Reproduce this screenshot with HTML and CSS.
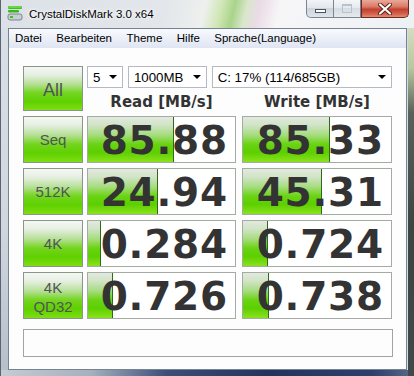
FILE: index.html
```html
<!DOCTYPE html>
<html>
<head>
<meta charset="utf-8">
<title>CrystalDiskMark 3.0 x64</title>
<link rel="stylesheet" href="styles.css">
</head>
<body>
<div class="window">
  <div class="titlebar">
    <svg class="app-icon" width="16" height="16" viewBox="0 0 16 16">
      <rect x="1" y="1" width="14" height="3" rx="1" fill="#3cc21e"/>
      <rect x="1.5" y="1.5" width="13" height="1" fill="#8eea6a"/>
      <rect x="1" y="5" width="11" height="2.5" rx="1" fill="#34b81a"/>
      <rect x="1" y="9" width="14" height="6" rx="2" fill="#c9ced4" stroke="#7d858e" stroke-width="1"/>
      <rect x="3" y="11" width="3" height="2" fill="#3cc21e"/>
    </svg>
    <span class="title">CrystalDiskMark 3.0 x64</span>
    <div class="caption">
      <div class="cbtn cmin"><span class="min-glyph"></span></div>
      <div class="cbtn cmax"><span class="max-glyph"></span></div>
      <div class="cbtn cclose">
        <svg width="16" height="12" viewBox="0 0 16 12">
          <path d="M3 1.5 L13 10.5 M13 1.5 L3 10.5" stroke="#5a1e18" stroke-width="4" stroke-linecap="round"/>
          <path d="M3 1.5 L13 10.5 M13 1.5 L3 10.5" stroke="#ffffff" stroke-width="2.2" stroke-linecap="round"/>
        </svg>
      </div>
    </div>
  </div>
  <div class="client">
    <div class="menubar">
      <span class="mitem">Datei</span>
      <span class="mitem">Bearbeiten</span>
      <span class="mitem">Theme</span>
      <span class="mitem">Hilfe</span>
      <span class="mitem">Sprache(Language)</span>
    </div>
    <div class="content">
      <div class="board">
        <div class="gbtn all">All</div>
        <div class="selects">
          <div class="select s-count"><span>5</span><i class="arrow"></i></div>
          <div class="select s-size"><span>1000MB</span><i class="arrow"></i></div>
          <div class="select s-drive"><span>C: 17% (114/685GB)</span><i class="arrow"></i></div>
        </div>
        <div class="head">Read [MB/s]</div>
        <div class="head write">Write [MB/s]</div>

        <div class="gbtn">Seq</div>
        <div class="val"><div class="bar" style="width:58.7%"></div><span class="num">85.88</span></div>
        <div class="val write"><div class="bar" style="width:58.6%"></div><span class="num">85.33</span></div>

        <div class="gbtn">512K</div>
        <div class="val"><div class="bar" style="width:47.9%"></div><span class="num">24.94</span></div>
        <div class="val write"><div class="bar" style="width:53.1%"></div><span class="num">45.31</span></div>

        <div class="gbtn">4K</div>
        <div class="val"><div class="bar" style="width:9.1%"></div><span class="num">0.284</span></div>
        <div class="val write"><div class="bar" style="width:17.2%"></div><span class="num">0.724</span></div>

        <div class="gbtn two">4K<br>QD32</div>
        <div class="val"><div class="bar" style="width:17.2%"></div><span class="num">0.726</span></div>
        <div class="val write"><div class="bar" style="width:17.4%"></div><span class="num">0.738</span></div>
      </div>
      <div class="status"></div>
    </div>
  </div>
</div>
</body>
</html>
```

FILE: styles.css
```css
html, body {
  margin: 0;
  padding: 0;
  background: #ffffff;
}

.window {
  width: 414px;
  height: 376px;
  box-sizing: border-box;
  display: flex;
  flex-direction: column;
  padding: 0 7px 6px 7px;
  border-left: 1px solid #5a6472;
  background:
    linear-gradient(to bottom, #e6ecd8 0%, #b8c8a0 18%, #58625a 30%, #3e4642 60%, #40484a 100%) right top / 6px 100% no-repeat,
    linear-gradient(to right, #c4ccd4 0%, #a4b0be 22%, #3c4e78 40%, #22345e 65%, #2c3e6c 90%, #5a6a8a 100%) left bottom / 100% 6px no-repeat,
    linear-gradient(to bottom, #dbe1e8 0%, #d0d7df 60%, #b6bec8 100%) left top / 7px 100% no-repeat,
    #d6dce3;
  font-family: "Liberation Sans", Arial, sans-serif;
}

.titlebar {
  height: 28px;
  margin: 0 -7px 0 -7px;
  display: flex;
  align-items: flex-start;
  background: linear-gradient(103deg, #dce1e7 0%, #e3e7eb 40%, #eef0ee 49%, #cfe6b4 53%, #a9d48a 56%, #d9e6cc 59%, #eadbe6 62%, #f6f6f7 67%, #eef1f4 100%);
}

.app-icon {
  margin: 5px 0 0 6px;
  flex: none;
}

.title {
  margin: 7px 0 0 6px;
  font-size: 11.5px;
  line-height: 14px;
  color: #000;
  text-shadow: 0 0 6px #ffffff, 0 0 3px #ffffff;
}

.caption {
  margin-left: auto;
  margin-right: 5px;
  display: flex;
  height: 18px;
}

.cbtn {
  box-sizing: border-box;
  height: 18px;
  display: flex;
  align-items: center;
  justify-content: center;
  border: 1px solid #7a8592;
  border-top: none;
}

.cmin {
  width: 28px;
  border-radius: 0 0 0 5px;
  background: linear-gradient(#f2f4f7 0%, #e2e7ed 45%, #cdd4dc 50%, #dfe4ea 100%);
}

.cmax {
  width: 27px;
  border-left: none;
  background: linear-gradient(#f4f6f8 0%, #e6eaef 45%, #d6dce3 50%, #e6eaef 100%);
}

.cclose {
  width: 48px;
  border: 1px solid #6a2a22;
  border-top: none;
  border-radius: 0 0 5px 0;
  background: linear-gradient(#eaa898 0%, #d97a68 40%, #c2402e 55%, #d2604c 80%, #e48c70 100%);
}

.min-glyph {
  width: 9px;
  height: 2px;
  margin-top: 4px;
  background: #ffffff;
  border: 1px solid #4a5360;
}

.max-glyph {
  width: 8px;
  height: 6px;
  border: 1px solid #b9c1ca;
  border-top-width: 2px;
}

.client {
  flex: 1;
  display: flex;
  flex-direction: column;
  border: 1px solid #77828f;
  background: #fdfdfd;
}

.menubar {
  height: 19px;
  display: flex;
  align-items: center;
  padding-left: 0;
  background: linear-gradient(#f8fafd 0%, #ebeff8 50%, #dfe5f2 100%);
  font-size: 11.5px;
  color: #000;
}

.mitem {
  padding: 0 7px 0 7px;
  line-height: 19px;
  margin-right: 0.5px;
}

.mitem:first-child {
  padding-left: 6px;
}

.content {
  flex: 1;
  padding: 18px 0 0 14px;
  background-color: #fdfdfd;
  background-image:
    radial-gradient(circle at 1px 1px, rgba(240, 160, 210, 0.22) 0.6px, transparent 0.7px),
    radial-gradient(circle at 1px 1px, rgba(150, 210, 170, 0.2) 0.6px, transparent 0.7px),
    radial-gradient(circle at 1px 1px, rgba(160, 180, 240, 0.18) 0.6px, transparent 0.7px);
  background-size: 9px 7px, 13px 9px, 11px 15px;
  background-position: 0 0, 4px 3px, 6px 5px;
}

.board {
  display: grid;
  grid-template-columns: 60px 149px 152px;
  grid-template-rows: 22px 18px 47px 47px 47px 47px;
  column-gap: 4px;
  row-gap: 5px;
}

.gbtn {
  box-sizing: border-box;
  display: flex;
  align-items: center;
  justify-content: center;
  text-align: center;
  border: 1px solid #8a968a;
  background: linear-gradient(#f4f7f2 0%, #e6efe2 18%, #b6e096 40%, #74d520 60%, #5fd000 80%, #7ede12 100%);
  color: #52525a;
  font-size: 15px;
  line-height: 17px;
}

.gbtn.all {
  grid-row: 1 / 3;
  font-size: 18px;
  padding-top: 4px;
}

.gbtn.two {
  font-size: 15px;
  line-height: 19px;
  padding-top: 2px;
}

.selects {
  grid-column: 2 / 4;
  display: flex;
  gap: 5px;
}

.select {
  box-sizing: border-box;
  height: 22px;
  display: flex;
  align-items: center;
  padding: 0 0 0 5px;
  border: 1px solid #b5bac2;
  background: #ffffff;
  font-size: 13.3px;
  color: #000;
}

.select span {
  flex: 1;
}

.s-count { width: 36px; }
.s-size { width: 79px; }
.s-drive { width: 181px; }

.arrow {
  width: 0;
  height: 0;
  margin-right: 5px;
  border-left: 4px solid transparent;
  border-right: 4px solid transparent;
  border-top: 4px solid #000;
}

.head {
  display: flex;
  align-items: center;
  justify-content: center;
  font-family: "DejaVu Sans", Verdana, sans-serif;
  font-weight: bold;
  font-size: 15px;
  color: #333333;
  line-height: 18px;
}

.head.write {
  margin-left: 2px;
}

.val {
  box-sizing: border-box;
  display: grid;
  border: 1px solid #a3aba3;
  background: #ffffff;
}

.val.write {
  margin-left: 2px;
}

.bar {
  grid-area: 1 / 1;
  box-sizing: border-box;
  border-right: 1px solid #2e6a18;
  background: linear-gradient(#e2e9df 0%, #d0e4c6 18%, #a6dc7e 40%, #6ad414 60%, #5ccf00 78%, #8ae21c 100%);
}

.num {
  grid-area: 1 / 1;
  justify-self: end;
  align-self: center;
  padding: 2px 7px 0 0;
  font-family: "DejaVu Sans", Verdana, sans-serif;
  font-weight: bold;
  font-size: 39px;
  letter-spacing: 0.8px;
  line-height: 43px;
  color: #333333;
}

.status {
  box-sizing: border-box;
  width: 370px;
  height: 28px;
  margin-top: 10px;
  border: 1px solid #a6a0aa;
}
```
